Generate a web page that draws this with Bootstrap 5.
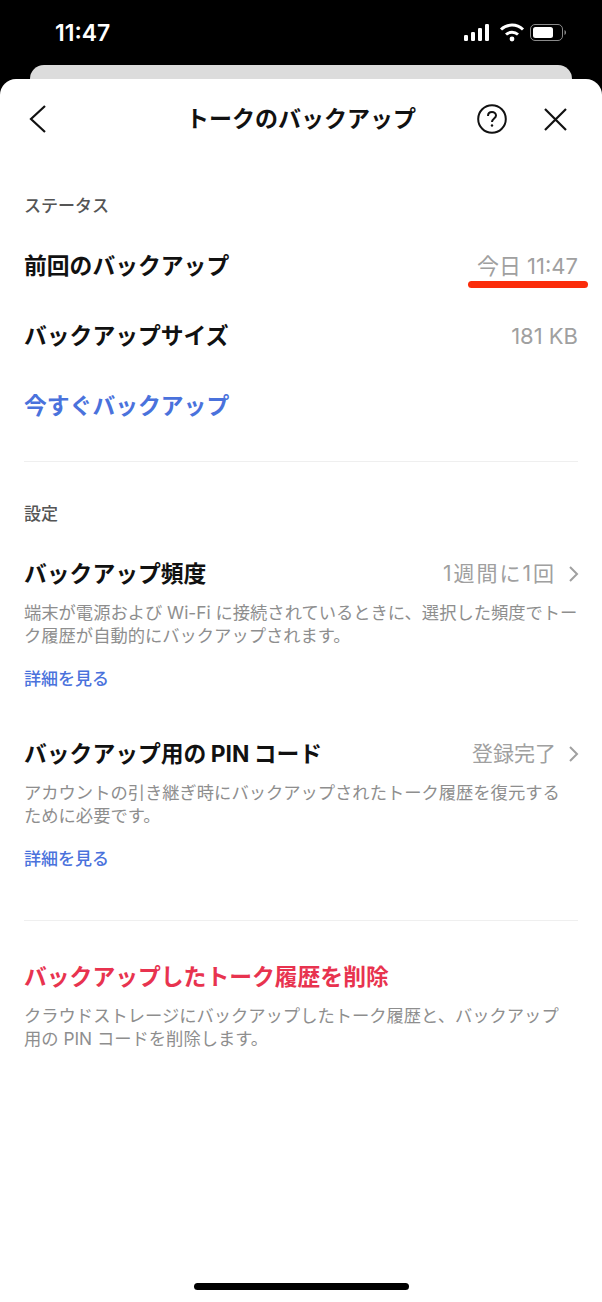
<!DOCTYPE html>
<html lang="ja">
<head>
  <meta charset="UTF-8">
  <meta name="viewport" content="width=device-width, initial-scale=1.0">
  <title>トークのバックアップ</title>
  <link href="https://cdn.jsdelivr.net/npm/bootstrap@5.3.0/dist/css/bootstrap.min.css" rel="stylesheet">
  <style>
    body {
      background: #000;
      font-family: Inter, "Noto Sans CJK JP", sans-serif;
      color: #111;
    }
    .phone { width: 602px; height: 1302px; overflow: hidden; }
    .status-bar { height: 65px; padding: 17px 34px 0 55px; color: #fff; }
    .status-time { font-size: 23px; font-weight: 600; line-height: 32px; }
    .status-icons { margin-top: 5px; }
    .back-sheet { height: 14px; margin: 0 30px; background: #dcdcdc; border-radius: 14px 14px 0 0; }
    .sheet { height: 1223px; background: #fff; border-radius: 16px 16px 0 0; padding: 0 24px; position: relative; }
    .sheet-head { height: 80px; }
    .head-side { width: 120px; }
    .head-close { margin: 0 11px 0 37px; }
    .sheet-title { font-size: 23px; font-weight: 700; }
    .sec-label { font-size: 17px; font-weight: 500; line-height: 24px; color: #555; }
    .row-main { font-size: 22.8px; font-weight: 700; line-height: 40px; word-spacing: -1px; }
    .row-tall { height: 70px; }
    .row-value { font-size: 22px; color: #a0a0a0; }
    .val-cjk { font-size: 21px; }
    .val-wide { letter-spacing: 2px; }
    .row-chev { margin: 0 -1px 0 13px; }
    .blue-act { color: #4a72dc; }
    .red-act { color: #e8334f; }
    .desc { font-size: 17.3px; line-height: 23px; color: #8e8e8e; margin: 7px 0 0; }
    .more { display: block; font-size: 17px; font-weight: 500; line-height: 24px; color: #4a72dc; margin-top: 20px; text-decoration: none; }
    .rule { height: 1px; background: #efefef; }
    .mark-line { position: absolute; left: 468px; top: 202px; width: 120px; height: 7px; background: #fb2c0a; border-radius: 4px; }
    .home-bar { position: absolute; left: 194px; top: 1204px; width: 215px; height: 7px; background: #000; border-radius: 4px; }
    .status-label { margin-top: 35px; }
    .status-first { margin-top: 13px; }
    .rule-a { margin-top: 20px; }
    .set-label { margin-top: 40px; }
    .set-first { margin-top: 28px; }
    .set-next { margin-top: 43px; }
    .rule-b { margin-top: 49px; }
    .del-row { margin-top: 36px; }
  </style>
</head>

<body>
  <div class="phone">
    <!-- Status bar -->
    <div class="status-bar d-flex justify-content-between align-items-start">
      <span class="status-time">11:47</span>
      <svg width="106" height="24" viewBox="0 0 106 24" class="status-icons">
        <g fill="#fff">
          <rect x="2" y="13" width="4" height="6" rx="1.2"/>
          <rect x="9" y="10" width="4" height="9" rx="1.2"/>
          <rect x="16" y="6" width="4" height="13" rx="1.2"/>
          <rect x="23" y="2" width="4" height="17" rx="1.2"/>
          <circle cx="50" cy="17" r="2.4"/>
        </g>
        <g fill="none" stroke="#fff" stroke-width="3">
          <path d="M39 7.500a16 16 0 0 1 22 0"/>
          <path d="M44 12.500a9 9 0 0 1 12 0"/>
        </g>
        <rect x="68.500" y="2.500" width="32" height="16" rx="4.500" fill="none" stroke="#8a8a8a"/>
        <rect x="71" y="5" width="20" height="11" rx="2.500" fill="#fff"/>
        <path d="M102.500 8v5c1-.4 1.500-1.400 1.500-2.500s-.5-2.100-1.500-2.500z" fill="#8a8a8a"/>
      </svg>
    </div>
    <div class="back-sheet"></div>

    <div class="sheet">
      <!-- Header -->
      <div class="sheet-head d-flex align-items-center">
        <div class="head-side d-flex align-items-center">
          <svg width="24" height="30" viewBox="0 0 24 30" fill="none" stroke="#111" stroke-width="2.200">
            <path d="M21 2 7 15l14 13"/>
          </svg>
        </div>
        <div class="sheet-title flex-grow-1 text-center">トークのバックアップ</div>
        <div class="head-side d-flex align-items-center justify-content-end">
          <svg width="30" height="30" viewBox="0 0 30 30" fill="none" stroke="#111" stroke-width="2">
            <circle cx="15" cy="15" r="13.800"/>
            <path d="M11 12c0-2.500 1.800-4 4-4s4 1.500 4 3.500c0 3-4 3-4 6.500"/>
            <circle cx="15" cy="21.500" r="1.200" fill="#111" stroke="none"/>
          </svg>
          <svg class="head-close" width="23" height="23" viewBox="0 0 23 23" fill="none" stroke="#111" stroke-width="2.200">
            <path d="M1 1l21 21M22 1 1 22"/>
          </svg>
        </div>
      </div>

      <!-- ステータス -->
      <div class="sec-label status-label">ステータス</div>
      <div class="row-tall d-flex justify-content-between align-items-center status-first">
        <span class="row-main">前回のバックアップ</span>
        <span class="row-value">今日 11:47</span>
      </div>
      <div class="row-tall d-flex justify-content-between align-items-center">
        <span class="row-main">バックアップサイズ</span>
        <span class="row-value">181 KB</span>
      </div>
      <div class="row-tall d-flex align-items-center">
        <span class="row-main blue-act">今すぐバックアップ</span>
      </div>
      <div class="rule rule-a"></div>

      <!-- 設定 -->
      <div class="sec-label set-label">設定</div>
      <div class="d-flex justify-content-between align-items-center set-first">
        <span class="row-main">バックアップ頻度</span>
        <span class="d-flex align-items-center">
          <span class="row-value val-cjk val-wide">1週間に1回</span>
          <svg class="row-chev" width="10" height="16" viewBox="0 0 10 16" fill="none" stroke="#a0a0a0" stroke-width="2"><path d="m1 1 7 7-7 7"/></svg>
        </span>
      </div>
      <p class="desc">端末が電源および Wi-Fi に接続されているときに、選択した頻度でトーク履歴が自動的にバックアップされます。</p>
      <a class="more" href="#">詳細を見る</a>

      <div class="d-flex justify-content-between align-items-center set-next">
        <span class="row-main">バックアップ用の PIN コード</span>
        <span class="d-flex align-items-center">
          <span class="row-value val-cjk">登録完了</span>
          <svg class="row-chev" width="10" height="16" viewBox="0 0 10 16" fill="none" stroke="#a0a0a0" stroke-width="2"><path d="m1 1 7 7-7 7"/></svg>
        </span>
      </div>
      <p class="desc">アカウントの引き継ぎ時にバックアップされたトーク履歴を復元する<br>ために必要です。</p>
      <a class="more" href="#">詳細を見る</a>
      <div class="rule rule-b"></div>

      <!-- 削除 -->
      <div class="row-main red-act del-row">バックアップしたトーク履歴を削除</div>
      <p class="desc">クラウドストレージにバックアップしたトーク履歴と、バックアップ<br>用の PIN コードを削除します。</p>

      <div class="mark-line"></div>
      <div class="home-bar"></div>
    </div>
  </div>

  <script src="https://cdn.jsdelivr.net/npm/bootstrap@5.3.0/dist/js/bootstrap.bundle.min.js"></script>
</body>
</html>
